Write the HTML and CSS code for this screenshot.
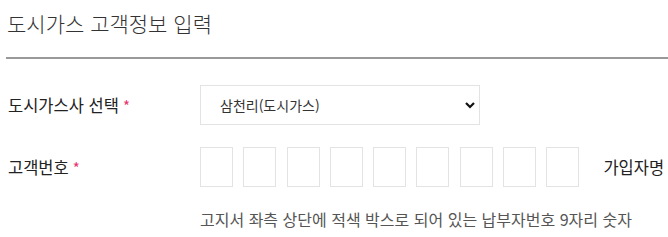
FILE: index.html
```html
<!DOCTYPE html>
<html lang="ko">
<head>
    <meta charset="UTF-8">
    <title>도시가스 고객정보 입력</title>
    <link rel="stylesheet" href="styles.css">
</head>
<body>

<div class="page">
    <h2 class="title">도시가스 고객정보 입력</h2>

    <div class="form">
        <!-- 도시가스사 -->
        <div class="row row-company">
            <label class="label" for="company">도시가스사 선택<span class="req">*</span></label>
            <div class="select-wrap">
                <select id="company" class="select">
                    <option>삼천리(도시가스)</option>
                </select>
                <svg class="chevron" width="12" height="8" viewBox="0 0 12 8">
                    <path d="M2 2 L6 6 L10 2" fill="none" stroke="#111" stroke-width="2.2"/>
                </svg>
            </div>
        </div>

        <!-- 고객번호 -->
        <div class="row row-number">
            <label class="label">고객번호<span class="req">*</span></label>
            <div class="digits">
                <input class="digit" maxlength="1">
                <input class="digit" maxlength="1">
                <input class="digit" maxlength="1">
                <input class="digit" maxlength="1">
                <input class="digit" maxlength="1">
                <input class="digit" maxlength="1">
                <input class="digit" maxlength="1">
                <input class="digit" maxlength="1">
                <input class="digit" maxlength="1">
            </div>
            <span class="name-label">가입자명</span>
        </div>

        <p class="help">고지서 좌측 상단에 적색 박스로 되어 있는 납부자번호 9자리 숫자</p>
    </div>
</div>

</body>
</html>
```

FILE: styles.css
```css
/* 기본 */
body {
    margin: 0;
    background-color: #fff;
    color: #222;
    font-family: "Noto Sans CJK KR", "Noto Sans", sans-serif;
}
.page {
    padding: 0 0 0 6px;
}
.title {
    margin: 0;
    padding: 5px 0 0 1px;
    height: 52px;
    font-size: 21px;
    font-weight: 300;
    color: #333;
    line-height: 36px;
    border-bottom: 2px solid #999;
}
.form {
    padding-top: 26px;
}
.row {
    display: flex;
    align-items: center;
    height: 40px;
}
.row-number {
    margin-top: 22px;
}
.label {
    width: 194px;
    padding-left: 2px;
    box-sizing: border-box;
    font-size: 16.5px;
    color: #222;
}
.req {
    color: #e8336d;
    margin-left: 4px;
    font-size: 15px;
}
.select-wrap {
    position: relative;
    width: 280px;
    height: 40px;
}
.select {
    appearance: none;
    -webkit-appearance: none;
    width: 100%;
    height: 100%;
    padding: 0 0 0 19px;
    border: 1px solid #e3e3e3;
    border-radius: 0;
    background-color: #fff;
    font-family: inherit;
    font-size: 14px;
    color: #333;
}
.chevron {
    position: absolute;
    right: 4px;
    top: 16px;
}
.digits {
    display: flex;
    gap: 10.3px;
}
.digit {
    width: 33px;
    height: 40px;
    box-sizing: border-box;
    border: 1px solid #e3e3e3;
    padding: 0;
    margin: 0;
    text-align: center;
}
.name-label {
    margin-left: 24px;
    font-size: 16.5px;
    color: #222;
}
.help {
    margin: 20px 0 0 194px;
    font-size: 16px;
    color: #555;
}
```
